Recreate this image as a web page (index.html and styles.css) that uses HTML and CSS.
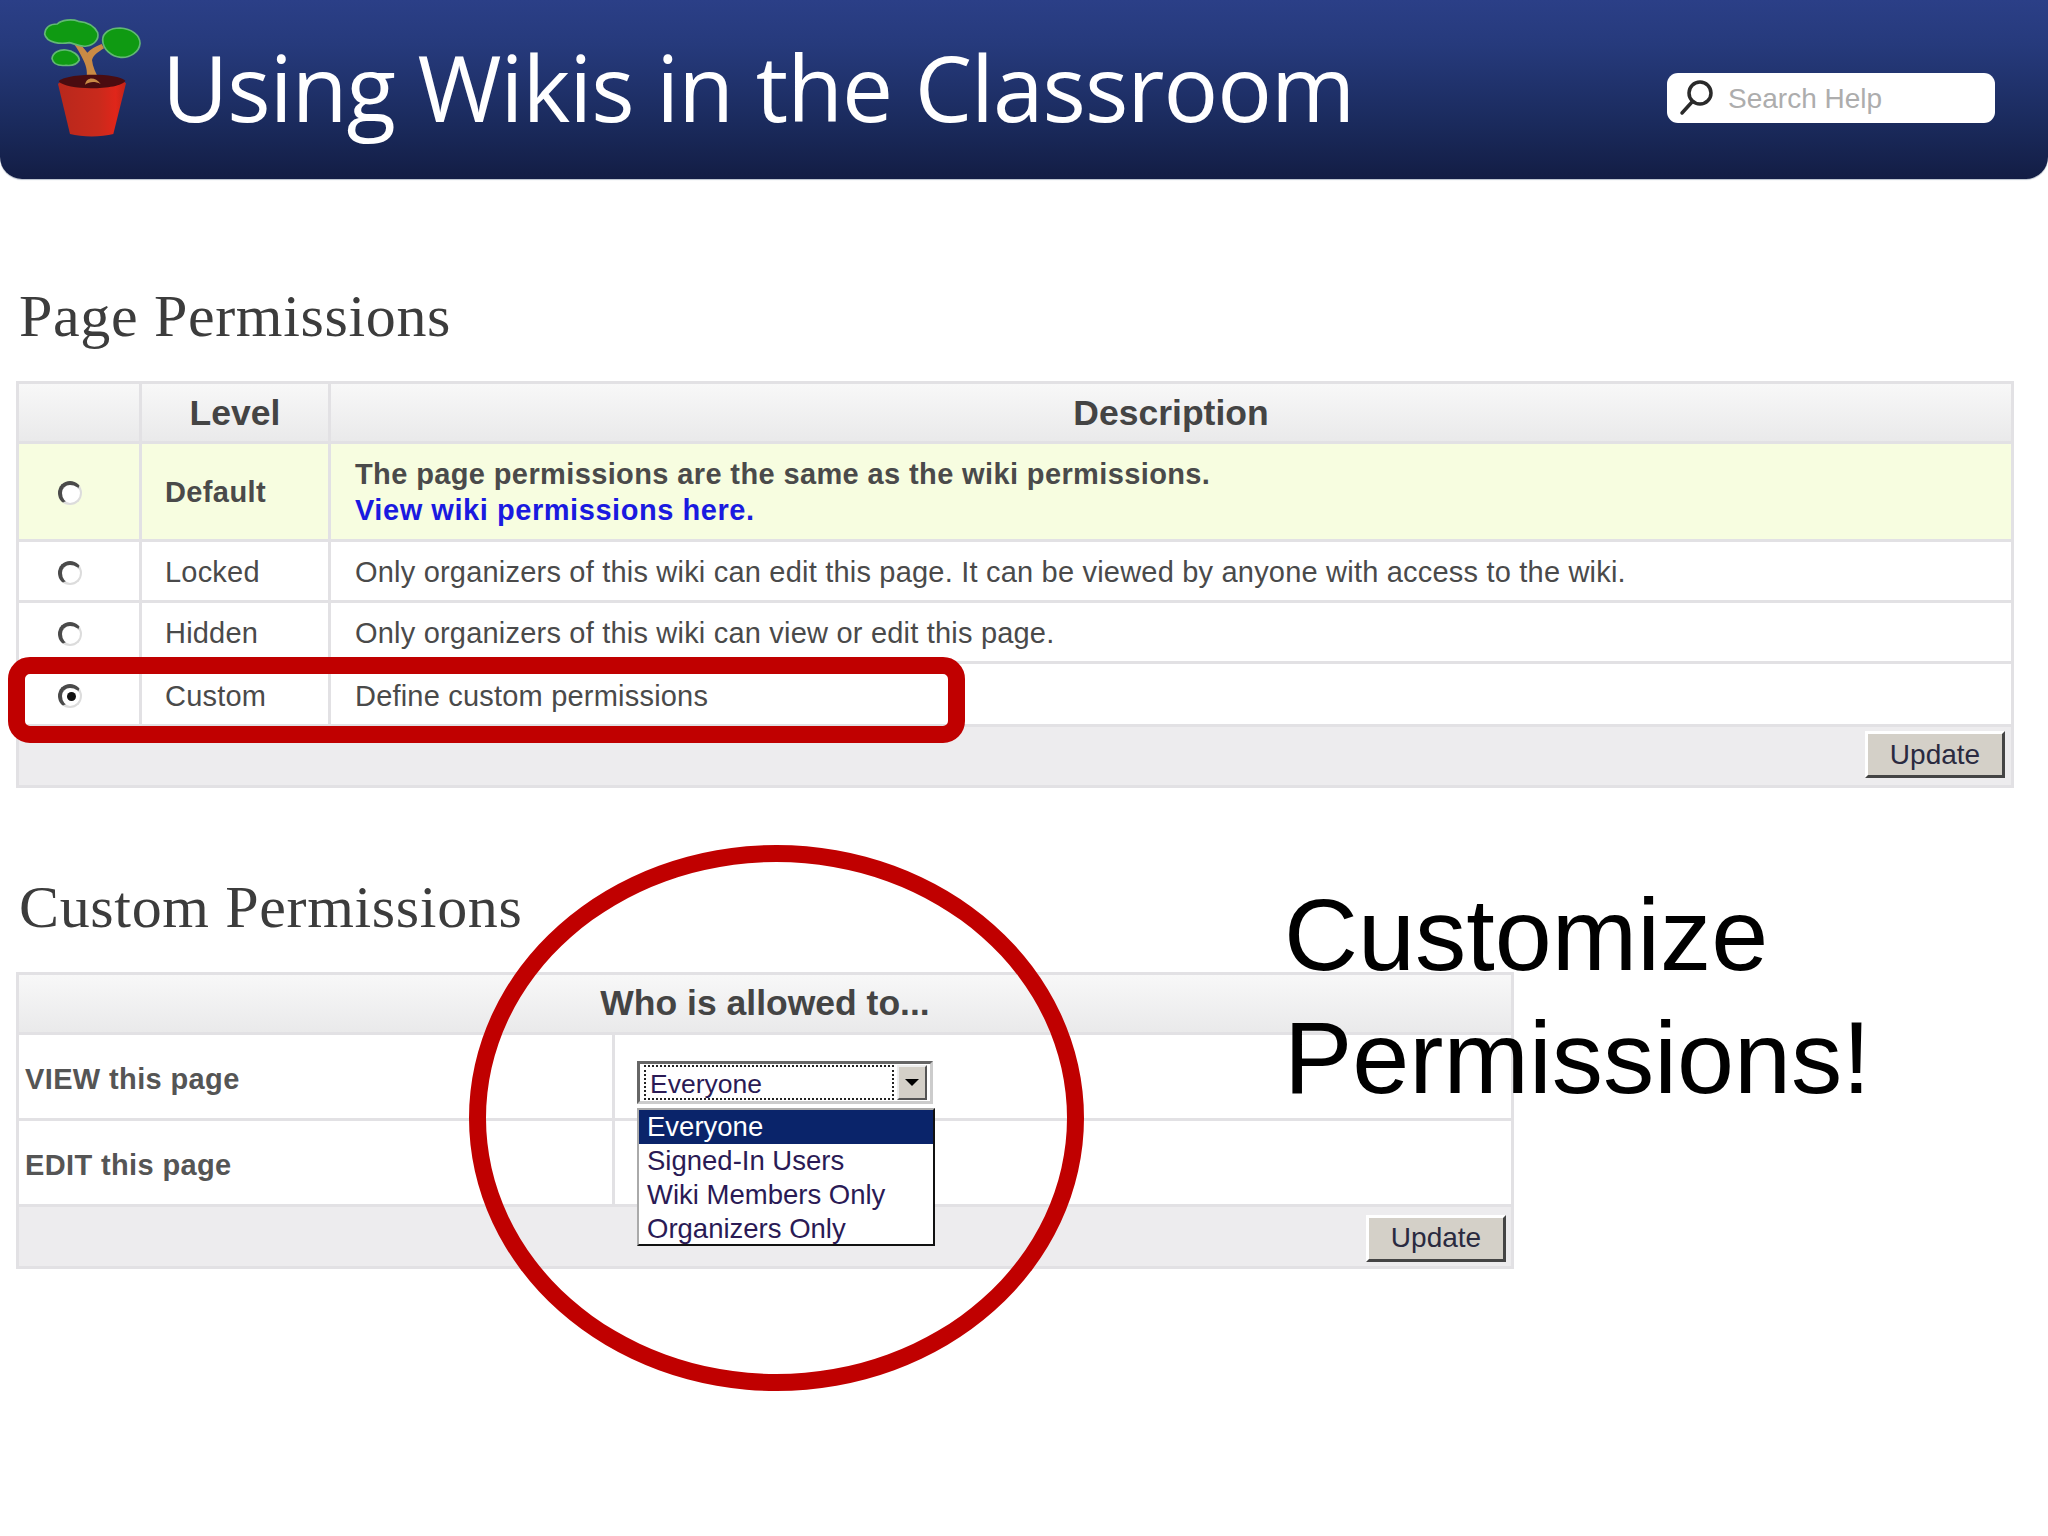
FILE: index.html
```html
<!DOCTYPE html>
<html lang="en">
<head>
<meta charset="utf-8">
<title>Using Wikis in the Classroom</title>
<link rel="stylesheet" href="styles.css">
</head>
<body>
<header class="banner">
  <svg class="logo" viewBox="0 0 390 420" aria-hidden="true">
    <defs>
      <linearGradient id="pot" x1="0" x2="1" y1="0" y2="0">
        <stop offset="0" stop-color="#b8281c"/>
        <stop offset="0.6" stop-color="#c92a1c"/>
        <stop offset="0.85" stop-color="#e0261a"/>
        <stop offset="1" stop-color="#c02418"/>
      </linearGradient>
    </defs>
    <path d="M168 212 C174 190 170 170 160 150 C150 130 142 115 130 100 L148 95 C155 108 165 118 172 128 C182 118 195 110 215 102 L222 115 C205 126 190 135 186 150 C188 170 197 190 210 212 Z" fill="#c98a45"/>
    <g fill="#0f9a12" stroke="#62b874" stroke-width="5" stroke-linejoin="round">
      <path d="M44 72 C46 50 62 42 82 42 C95 30 125 26 145 34 C170 36 192 46 203 68 C208 88 192 106 170 108 C150 112 132 100 118 98 C92 102 50 100 44 72 Z"/>
      <path d="M218 90 C218 68 240 54 270 54 C305 56 330 76 330 100 C328 126 300 144 272 142 C245 140 218 118 218 90 Z"/>
      <path d="M66 146 C68 128 88 118 108 120 C128 122 146 134 148 150 C140 164 125 168 108 166 C90 168 70 164 66 146 Z"/>
    </g>
    <path d="M84 222 C100 196 260 190 288 220 L250 372 C215 382 155 382 120 372 Z" fill="url(#pot)"/>
    <path d="M86 214 C105 190 258 186 286 212 C272 240 110 244 86 214 Z" fill="#4a0c10"/>
    <path d="M165 224 C170 200 195 200 212 222 C195 214 180 214 165 224 Z" fill="#c98a45"/>
  </svg>
  <h1 class="banner-title">Using Wikis in the Classroom</h1>
  <div class="search">
    <svg class="search-icon" viewBox="0 0 36 38" aria-hidden="true">
      <circle cx="21" cy="14" r="11" fill="none" stroke="#2a2a2a" stroke-width="3.5"/>
      <path d="M13 23 L3 34" stroke="#2a2a2a" stroke-width="3.5" stroke-linecap="round"/>
    </svg>
    <span class="search-text">Search Help</span>
  </div>
</header>

<main class="content">
  <h2 class="section-title first">Page Permissions</h2>
  <table class="grid grid-wide">
    <colgroup><col class="c-radio"><col class="c-level"><col></colgroup>
    <thead>
      <tr class="row-head"><th></th><th>Level</th><th>Description</th></tr>
    </thead>
    <tbody>
      <tr class="row-default">
        <td class="cell-radio"><span class="radio"></span></td>
        <td class="strong cell-level">Default</td>
        <td class="strong">The page permissions are the same as the wiki permissions.<br><a class="link" href="#">View wiki permissions here.</a></td>
      </tr>
      <tr class="row"><td class="cell-radio"><span class="radio"></span></td><td class="cell-level">Locked</td><td>Only organizers of this wiki can edit this page. It can be viewed by anyone with access to the wiki.</td></tr>
      <tr class="row"><td class="cell-radio"><span class="radio"></span></td><td class="cell-level">Hidden</td><td>Only organizers of this wiki can view or edit this page.</td></tr>
      <tr class="row row-custom"><td class="cell-radio"><span class="radio radio-on"></span></td><td class="cell-level">Custom</td><td>Define custom permissions</td></tr>
      <tr class="row-foot"><td colspan="3"><button class="btn" type="button">Update</button></td></tr>
    </tbody>
  </table>

  <h2 class="section-title second">Custom Permissions</h2>
  <table class="grid grid-narrow">
    <colgroup><col class="c-what"><col></colgroup>
    <thead>
      <tr class="row-head"><th colspan="2">Who is allowed to...</th></tr>
    </thead>
    <tbody>
      <tr class="row-perm"><td class="perm-label">VIEW this page</td><td></td></tr>
      <tr class="row-perm"><td class="perm-label">EDIT this page</td><td></td></tr>
      <tr class="row-foot"><td colspan="2"><button class="btn" type="button">Update</button></td></tr>
    </tbody>
  </table>
</main>

<div class="select">
  <span class="select-value">Everyone</span>
  <span class="select-arrow"></span>
</div>
<ul class="select-list">
  <li class="select-on">Everyone</li>
  <li>Signed-In Users</li>
  <li>Wiki Members Only</li>
  <li>Organizers Only</li>
</ul>

<div class="mark-rect"></div>
<div class="mark-ellipse"></div>
<p class="callout">Customize<br>Permissions!</p>
</body>
</html>
```

FILE: styles.css
```css
* { box-sizing: border-box; }
html, body { margin: 0; padding: 0; }
body {
  position: relative;
  width: 2048px;
  height: 1536px;
  overflow: hidden;
  background: #fff;
  font-family: "Liberation Sans", Arial, sans-serif;
  color: #4a4a4a;
}

.banner {
  height: 179px;
  display: flex;
  align-items: center;
  padding: 0 53px 0 30px;
  background: linear-gradient(#2b3f87 0%, #263a7c 25%, #1a2a5c 70%, #131d44 100%);
  border-radius: 0 0 22px 22px;
  box-shadow: 0 1px 1px #b8c0cc;
}
.logo { width: 130px; height: 140px; flex: none; margin-top: -19px; }
.banner-title {
  margin: -4px 0 0 2px;
  font-family: "Open Sans", sans-serif;
  font-weight: 400;
  font-size: 91px;
  line-height: 1;
  color: #fff;
  letter-spacing: -1px;
  white-space: nowrap;
  flex: 1;
}
.search {
  width: 328px;
  height: 50px;
  margin-top: 17px;
  display: flex;
  align-items: center;
  padding-left: 12px;
  background: #fff;
  border-radius: 11px;
}
.search-icon { width: 36px; height: 38px; flex: none; }
.search-text { margin: 2px 0 0 13px; font-size: 28px; color: #adadad; }

.content { padding: 0 34px 0 16px; }
.section-title {
  margin: 0 0 0 3px;
  font-family: "Liberation Serif", serif;
  font-weight: 400;
  font-size: 60px;
  letter-spacing: 0.65px;
  line-height: 66px;
  color: #3c3c3c;
}
.section-title.first { padding-top: 104px; height: 202px; }
.section-title.second { margin-top: 86px; height: 98px; }

.grid {
  border-collapse: collapse;
  table-layout: fixed;
  border: 3px solid #e2e1e4;
  font-size: 29px;
  letter-spacing: 0.2px;
}
.grid-wide { width: 1998px; }
.grid-narrow { width: 1498px; }
.grid td, .grid th { border: 3px solid #e2e1e4; padding: 0 0 0 24px; }
.grid .cell-level { padding-left: 23px; }
.grid th { padding: 0; text-align: center; font-size: 35.5px; letter-spacing: 0; color: #444; }
.grid-wide .row-head th { padding-top: 2px; }
.c-radio { width: 123px; }
.c-level { width: 189px; }
.c-what { width: 596px; }

.row-head { height: 60px; background: linear-gradient(#f8f8f8, #e9e9ea); }
.row-default { height: 98px; background: #f7fde0; }
.row { height: 61px; background: #fff; }
.row-custom { height: 63px; }
.row-foot { height: 61px; background: #edecee; }
.grid-narrow .row-foot { height: 62px; }
.row-perm { height: 86px; background: #fff; }
.grid .row td { padding-top: 3px; }
.grid .row-custom td { padding-top: 5px; }
.grid .row-foot td { padding: 0 6px 3px 0; text-align: right; }
.grid-narrow .row-foot td { padding: 3px 5px 0 0; }
.grid .perm-label { padding: 6px 0 0 6px; font-weight: 700; color: #555; letter-spacing: 0.37px; }
.grid .row .cell-radio, .grid .cell-radio { padding: 0 0 0 39px; text-align: left; }
.strong { font-weight: 700; line-height: 36px; color: #4a4a4a; letter-spacing: 0.38px; padding-bottom: 3px; }
.link { color: #1a1ae0; text-decoration: none; letter-spacing: 0.55px; }

.radio {
  display: inline-flex;
  align-items: center;
  justify-content: center;
  width: 24px;
  height: 24px;
  vertical-align: middle;
  border-radius: 50%;
  border-style: solid;
  border-width: 4px 2px 2px 4px;
  border-color: #4a4a4a #dcdcdc #dcdcdc #4a4a4a;
  background: #fff;
}
.radio-on::after {
  content: "";
  width: 9px;
  height: 9px;
  border-radius: 50%;
  background: #111;
}

.btn {
  width: 140px;
  height: 47px;
  vertical-align: middle;
  padding: 0;
  font-family: "Liberation Sans", Arial, sans-serif;
  font-size: 28px;
  color: #2a2a40;
  background: #d4d0c8;
  border: 3px solid;
  border-color: #fff #444 #444 #fff;
}

.select {
  position: absolute;
  left: 637px;
  top: 1061px;
  width: 296px;
  height: 43px;
  display: flex;
  align-items: center;
  justify-content: space-between;
  padding: 0 3px 0 4px;
  background: #fff;
  border: 3px solid;
  border-color: #666 #ccc #ccc #666;
}
.select-value {
  flex: 1;
  height: 35px;
  margin-right: 3px;
  padding-left: 4px;
  font-size: 26.5px;
  line-height: 35px;
  color: #2a1a55;
  border: 2px dotted #222;
}
.select-arrow {
  position: relative;
  width: 30px;
  height: 35px;
  background: #d4d0c8;
  border: 2px solid;
  border-color: #eee #555 #555 #eee;
}
.select-arrow::after {
  content: "";
  position: absolute;
  left: 6px;
  top: 12px;
  border: 7px solid transparent;
  border-top: 7px solid #000;
  border-bottom: 0;
}
.select-list {
  position: absolute;
  left: 637px;
  top: 1108px;
  width: 298px;
  height: 138px;
  margin: 0;
  padding: 0;
  list-style: none;
  background: #fff;
  border: 2px solid;
  border-color: #aaa #111 #111 #aaa;
  font-size: 27.5px;
  color: #2a1a55;
}
.select-list li { height: 34px; line-height: 34px; padding-left: 8px; }
.select-list .select-on { background: #0a246a; color: #fff; }

.mark-rect {
  position: absolute;
  left: 8px;
  top: 657px;
  width: 957px;
  height: 86px;
  border: 17px solid #c00000;
  border-radius: 22px;
}
.mark-ellipse {
  position: absolute;
  left: 469px;
  top: 845px;
  width: 615px;
  height: 546px;
  border: 17px solid #c00000;
  border-radius: 50%;
}
.callout {
  position: absolute;
  left: 1284px;
  top: 873px;
  margin: 0;
  font-size: 102.5px;
  line-height: 123px;
  color: #000;
}
```
